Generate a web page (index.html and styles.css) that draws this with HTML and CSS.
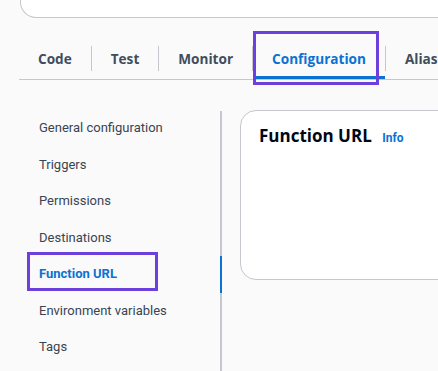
FILE: index.html
```html
<!DOCTYPE html>
<html>
<head>
<meta charset="utf-8">
<link rel="stylesheet" href="styles.css">
</head>
<body>
<div class="page">
  <div class="top-card"></div>
  <div class="tabs">
    <div class="tab"><span class="tab-label">Code</span></div>
    <div class="tab"><span class="tab-label sep">Test</span></div>
    <div class="tab"><span class="tab-label sep">Monitor</span></div>
    <div class="tab active"><span class="tab-label sep">Configuration</span></div>
    <div class="tab"><span class="tab-label sep">Aliases</span></div>
    <div class="highlight hl-tab"></div>
  </div>
  <div class="main">
    <nav class="side">
      <ul class="side-list">
        <li class="side-item">General configuration</li>
        <li class="side-item">Triggers</li>
        <li class="side-item">Permissions</li>
        <li class="side-item">Destinations</li>
        <li class="side-item active">Function URL</li>
        <li class="side-item">Environment variables</li>
        <li class="side-item">Tags</li>
      </ul>
      <div class="highlight hl-side"></div>
    </nav>
    <section class="card">
      <h2 class="card-title">Function URL <a class="info">Info</a></h2>
    </section>
  </div>
</div>
</body>
</html>
```
FILE: styles.css
```css
html, body {
  margin: 0;
  padding: 0;
  background: #fafafa;
  overflow: hidden;
}
body {
  font-family: "Roboto", "Liberation Sans", sans-serif;
  width: 438px;
  height: 371px;
}
.page {
  position: relative;
  width: 438px;
  height: 371px;
  overflow: hidden;
}
.top-card {
  height: 17px;
  margin-left: 20px;
  margin-right: -40px;
  background: #ffffff;
  border: 1px solid #c6c6cd;
  border-top: none;
  border-radius: 0 0 16px 16px;
}
.tabs {
  position: relative;
  display: flex;
  margin: 13px -60px 0 19px;
  border-bottom: 1px solid #c6c6cd;
}
.tab {
  position: relative;
  padding: 15px 0 8px;
  white-space: nowrap;
}
.tab-label {
  display: block;
  padding: 0 19px;
  line-height: 25px;
  font-family: "Open Sans", "Liberation Sans", sans-serif;
  font-size: 13.6px;
  font-weight: 700;
  color: #414d5c;
}
.tab-label.sep {
  border-left: 1px solid #c6c6cd;
}
.tab.active .tab-label {
  color: #0972d3;
}
.tab.active::after {
  content: "";
  position: absolute;
  left: 4px;
  right: 0;
  bottom: 0;
  height: 3px;
  background: #0972d3;
}
.highlight {
  position: absolute;
  border: 3px solid #6b40dc;
  box-sizing: border-box;
}
.hl-tab {
  left: 234px;
  top: 0;
  width: 126px;
  height: 54px;
}
.main {
  display: flex;
  gap: 18px;
  margin-top: 30px;
}
.side {
  position: relative;
  width: 220px;
  flex: none;
  border-right: 2px solid #c6c6cd;
  margin-top: 1px;
  height: 300px;
}
.side-list {
  list-style: none;
  margin: -1px 0 0;
  padding: 0;
}
.side-item {
  padding: 8px 0 8px 39px;
  line-height: 20.5px;
  font-size: 13px;
  color: #3b4452;
}
.side-item.active {
  font-weight: 700;
  color: #0972d3;
  margin-right: -2px;
  border-right: 2px solid #0972d3;
}
.hl-side {
  left: 27px;
  top: 141px;
  width: 131px;
  height: 39px;
}
.card {
  flex: 1;
  margin-right: -60px;
  height: 170px;
  background: #ffffff;
  border: 1px solid #c6c6cd;
  border-radius: 16px;
  padding: 13px 18px;
  box-sizing: border-box;
}
.card-title {
  margin: 0;
  font-family: "Open Sans", "Liberation Sans", sans-serif;
  font-size: 17px;
  line-height: 24px;
  font-weight: 700;
  color: #000716;
}
.info {
  margin-left: 6px;
  font-family: "Roboto", "Liberation Sans", sans-serif;
  font-size: 12px;
  font-weight: 700;
  color: #0972d3;
  text-decoration: none;
}
```
